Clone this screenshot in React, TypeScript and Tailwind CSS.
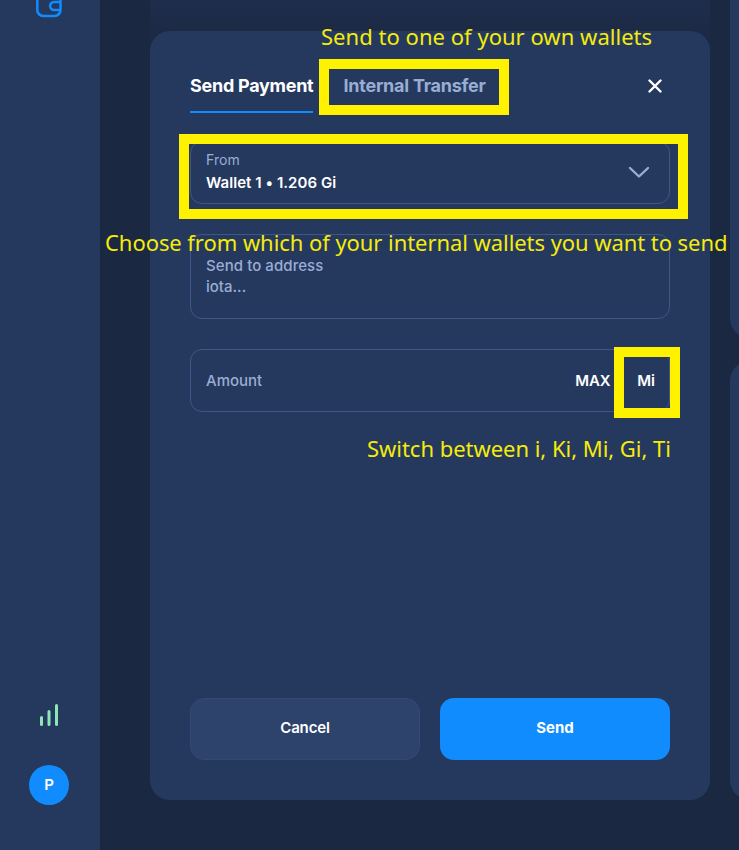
import React from "react";

function Note({ className, children }: { className: string; children: React.ReactNode }) {
  return (
    <span
      className={`absolute whitespace-nowrap font-['Noto_Sans','Open_Sans',sans-serif] text-[22px] leading-[24px] text-[#f6ec0a] ${className}`}
    >
      {children}
    </span>
  );
}

function Frame({ className }: { className: string }) {
  return <div className={`absolute border-10 border-[#fff200] ${className}`} />;
}

function Sidebar() {
  return (
    <aside className="flex w-[100px] shrink-0 flex-col items-center justify-between bg-[#25395f] pr-0.5 pb-[45px]">
      <svg className="-mt-2" width="26" height="26" viewBox="0 0 26 26" fill="none" stroke="#108cff" strokeWidth="2.5">
        <path d="M1.3 0V18a6 6 0 0 0 6 6H18.5a6 6 0 0 0 6-6V0" />
        <path d="M24.5 10.1H18a3.9 3.9 0 0 0 0 7.8H24.5" />
      </svg>
      <div className="flex flex-col items-center gap-[38px]">
        <svg width="20" height="24" viewBox="0 0 20 24" stroke="#8de6b5" strokeWidth="3" strokeLinecap="round">
          <path d="M2.5 14.5V21.5M10 8.5V21.5M17.5 2.5V21.5" />
        </svg>
        <div className="flex size-10 items-center justify-center rounded-full bg-[#108cff] text-[15px] font-semibold text-white">
          P
        </div>
      </div>
    </aside>
  );
}

function SendCard() {
  return (
    <section className="flex h-[769px] flex-col rounded-[20px] bg-[#25395f] px-10 pb-10">
      <header className="flex h-[82px] items-end justify-between">
        <nav className="flex gap-[30px] text-[18px] leading-[27px]">
          <span className="h-[41px] border-b-2 border-[#108cff] font-bold tracking-[-0.27px] text-white">
            Send Payment
          </span>
          <span className="h-[41px] font-bold tracking-[-0.24px] text-[#9aadd3]">Internal Transfer</span>
        </nav>
        <svg className="mr-2 mb-5" width="14" height="14" viewBox="0 0 14 14" stroke="#fff" strokeWidth="2.4" strokeLinecap="round">
          <path d="M1.5 1.5L12.5 12.5M12.5 1.5L1.5 12.5" />
        </svg>
      </header>

      <div className="mt-7 flex h-[63px] items-center justify-between rounded-[12px] border border-[#405684] pr-[19px] pl-[15px]">
        <div className="flex flex-col pb-0.5">
          <span className="text-[14px] leading-[22px] tracking-[0.1px] text-[#9aadd3]">From</span>
          <span className="text-[15px] leading-6 font-semibold tracking-[0.05px] text-white">Wallet 1 • 1.206 Gi</span>
        </div>
        <svg width="22" height="13" viewBox="0 0 22 13" fill="none" stroke="#9aadd3" strokeWidth="2.4" strokeLinecap="round" strokeLinejoin="round">
          <path d="M2 2L11 10.5L20 2" />
        </svg>
      </div>

      <div className="mt-[30px] flex h-[85px] flex-col rounded-[12px] border border-[#405684] px-[15px] pt-5 text-[15px] leading-[21px] font-medium text-[#9aadd3]">
        <span className="tracking-[0.07px]">Send to address</span>
        <span>iota...</span>
      </div>

      <div className="mt-[30px] flex h-[63px] items-center rounded-[12px] border border-[#405684] pt-0.5 pr-[14px] pl-[15px] text-[15px] font-semibold text-white">
        <span className="grow font-medium text-[#9aadd3]">Amount</span>
        <span className="tracking-[-0.2px]">MAX</span>
        <span className="ml-[27px]">Mi</span>
      </div>

      <footer className="mt-auto grid h-[62px] grid-cols-2 gap-5 text-[15px]">
        <button className="rounded-[14px] border border-[#324973] bg-[#2e436b] pb-0.5 font-semibold tracking-[-0.15px] text-white">Cancel</button>
        <button className="rounded-[14px] bg-[#108cff] pb-0.5 font-bold tracking-[-0.05px] text-white">Send</button>
      </footer>
    </section>
  );
}

export default function App() {
  return (
    <div className="relative flex h-[850px] w-[739px] overflow-hidden bg-[#1b2841] font-['Inter',sans-serif]">
      <Sidebar />
      <main className="ml-[50px] w-[560px] shrink-0">
        <div className="-mb-5 h-[51px] bg-linear-to-b from-[#1f2d4c] to-[#1b2841]" />
        <SendCard />
      </main>
      <div className="ml-5 flex w-[560px] shrink-0 flex-col">
        <div className="h-[338px] rounded-b-[20px] bg-[#25395f]" />
        <div className="mt-[23px] h-[439px] rounded-[20px] bg-[#25395f]" />
      </div>

      <Note className="top-[24px] left-[321px] tracking-[0.03px]">Send to one of your own wallets</Note>
      <Note className="top-[230px] left-[105px] tracking-[-0.06px]">
        Choose from which of your internal wallets you want to send
      </Note>
      <Note className="top-[436px] left-[367px] tracking-[-0.03px]">Switch between i, Ki, Mi, Gi, Ti</Note>
      <Frame className="top-[59px] left-[319px] h-[56px] w-[190px]" />
      <Frame className="top-[134px] left-[179px] h-[85px] w-[509px]" />
      <Frame className="top-[347px] left-[614px] h-[71px] w-[66px]" />
    </div>
  );
}
